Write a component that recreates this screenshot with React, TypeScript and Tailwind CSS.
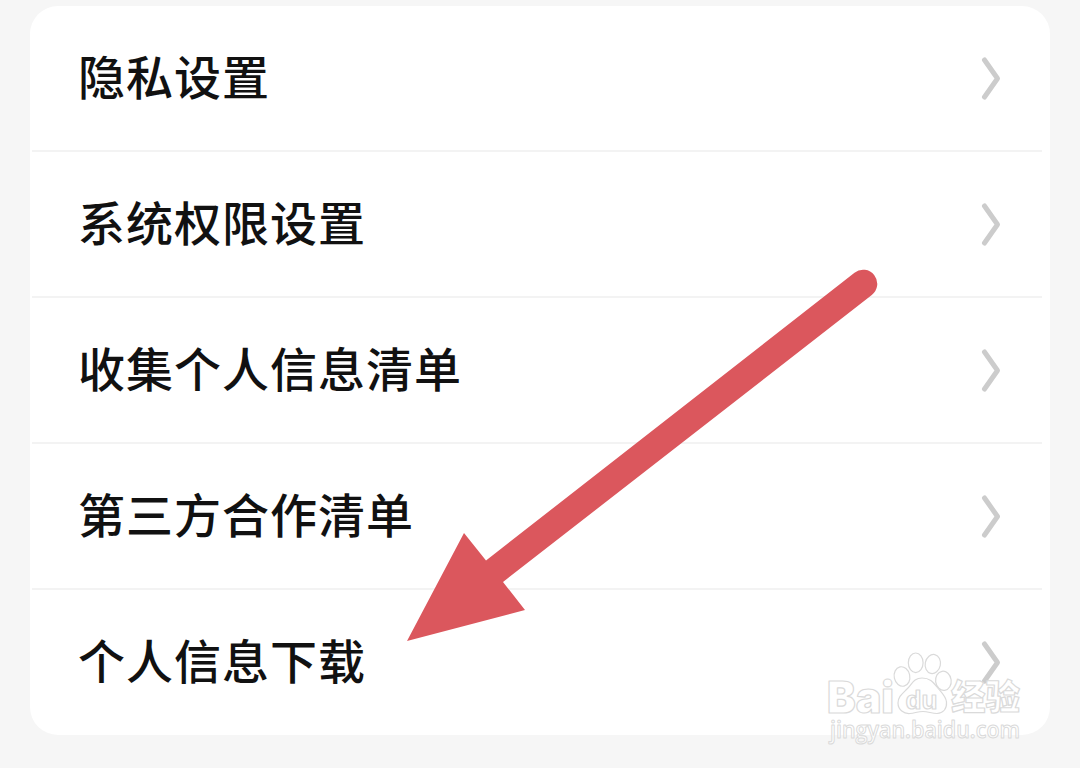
const items = [
  "隐私设置",
  "系统权限设置",
  "收集个人信息清单",
  "第三方合作清单",
  "个人信息下载",
];

export default function App() {
  return (
    <main className="relative h-[768px] w-[1080px] overflow-hidden bg-[#f6f6f6] px-[30px] pt-[6px] font-['Noto_Sans_CJK_SC',sans-serif]">
      <ul className="h-[729px] overflow-hidden rounded-[28px] bg-white">
        {items.map((label, i) => (
          <SettingsRow key={label} label={label} last={i === items.length - 1} />
        ))}
      </ul>
      <Arrow />
      <Watermark />
    </main>
  );
}

function SettingsRow({ label, last }: { label: string; last: boolean }) {
  return (
    <li>
      <button
        type="button"
        className="flex h-[144px] w-full items-center justify-between pr-[47px] pl-[48px] text-left"
      >
        <span className="pb-[6px] text-[47px] leading-[64px] font-medium tracking-[1px] text-[#111111]">
          {label}
        </span>
        <Chevron />
      </button>
      {!last && <div className="mr-[8px] ml-[2px] h-[2px] bg-[#f3f3f3]" />}
    </li>
  );
}

function Chevron() {
  return (
    <svg width="24" height="46" viewBox="0 0 24 46" fill="none" aria-hidden="true">
      <path d="M5.5 5L18.5 23.5L5.5 42" stroke="#cccccc" strokeWidth="5" strokeLinecap="round" strokeLinejoin="round" />
    </svg>
  );
}

function Arrow() {
  return (
    <svg className="absolute top-0 left-0" width="1080" height="768" viewBox="0 0 1080 768" aria-hidden="true">
      <path
        d="M407 641L464 533L486 560.5L854.5 272.7A14 14 0 0 1 871.8 295L503 582L525 610Z"
        fill="#db575d"
      />
    </svg>
  );
}

function Watermark() {
  return (
    <svg
      className="absolute top-[640px] left-[820px]"
      width="220"
      height="110"
      viewBox="820 640 220 110"
      fill="#ffffff"
      fillOpacity="0.7"
      stroke="#dadada"
      strokeWidth="1.2"
      strokeLinejoin="round"
    >
      <text
        x="827"
        y="712.5"
        fontSize="44"
        fontWeight="900"
        textLength="67"
        lengthAdjust="spacingAndGlyphs"
        className="font-['Inter','Liberation_Sans',sans-serif]"
      >
        Bai
      </text>
      <ellipse cx="902" cy="676.5" rx="7.8" ry="9.8" transform="rotate(-12 902 676.5)" />
      <ellipse cx="915.7" cy="662.8" rx="7.4" ry="9.8" />
      <ellipse cx="932.8" cy="664" rx="7.6" ry="9.6" transform="rotate(12 932.8 664)" />
      <ellipse cx="943.4" cy="680.8" rx="7.8" ry="9.6" transform="rotate(-8 943.4 680.8)" />
      <path d="M922 678C914 678 912 684 907 689C902 694 898 697 898 703C898 710 904 714 910 713.5C915 713 918 711.5 923 711.5C928 711.5 932 713.5 937 713.5C943 713 947 709 946.5 702C946 696 941 692 937 687C933 682 930 678 922 678Z" />
      <text
        x="905.5"
        y="708.5"
        fontSize="26"
        fontWeight="700"
        textLength="32"
        lengthAdjust="spacingAndGlyphs"
        className="font-['Liberation_Sans',sans-serif]"
      >
        du
      </text>
      <text
        x="951"
        y="710"
        fontSize="35"
        fontWeight="900"
        textLength="69"
        lengthAdjust="spacingAndGlyphs"
        className="font-['Noto_Sans_CJK_SC',sans-serif]"
      >
        经验
      </text>
      <text
        x="830"
        y="738"
        fontSize="22.5"
        fontWeight="600"
        strokeWidth="1"
        textLength="190"
        lengthAdjust="spacingAndGlyphs"
        className="font-['Open_Sans',sans-serif]"
      >
        jingyan.baidu.com
      </text>
    </svg>
  );
}
